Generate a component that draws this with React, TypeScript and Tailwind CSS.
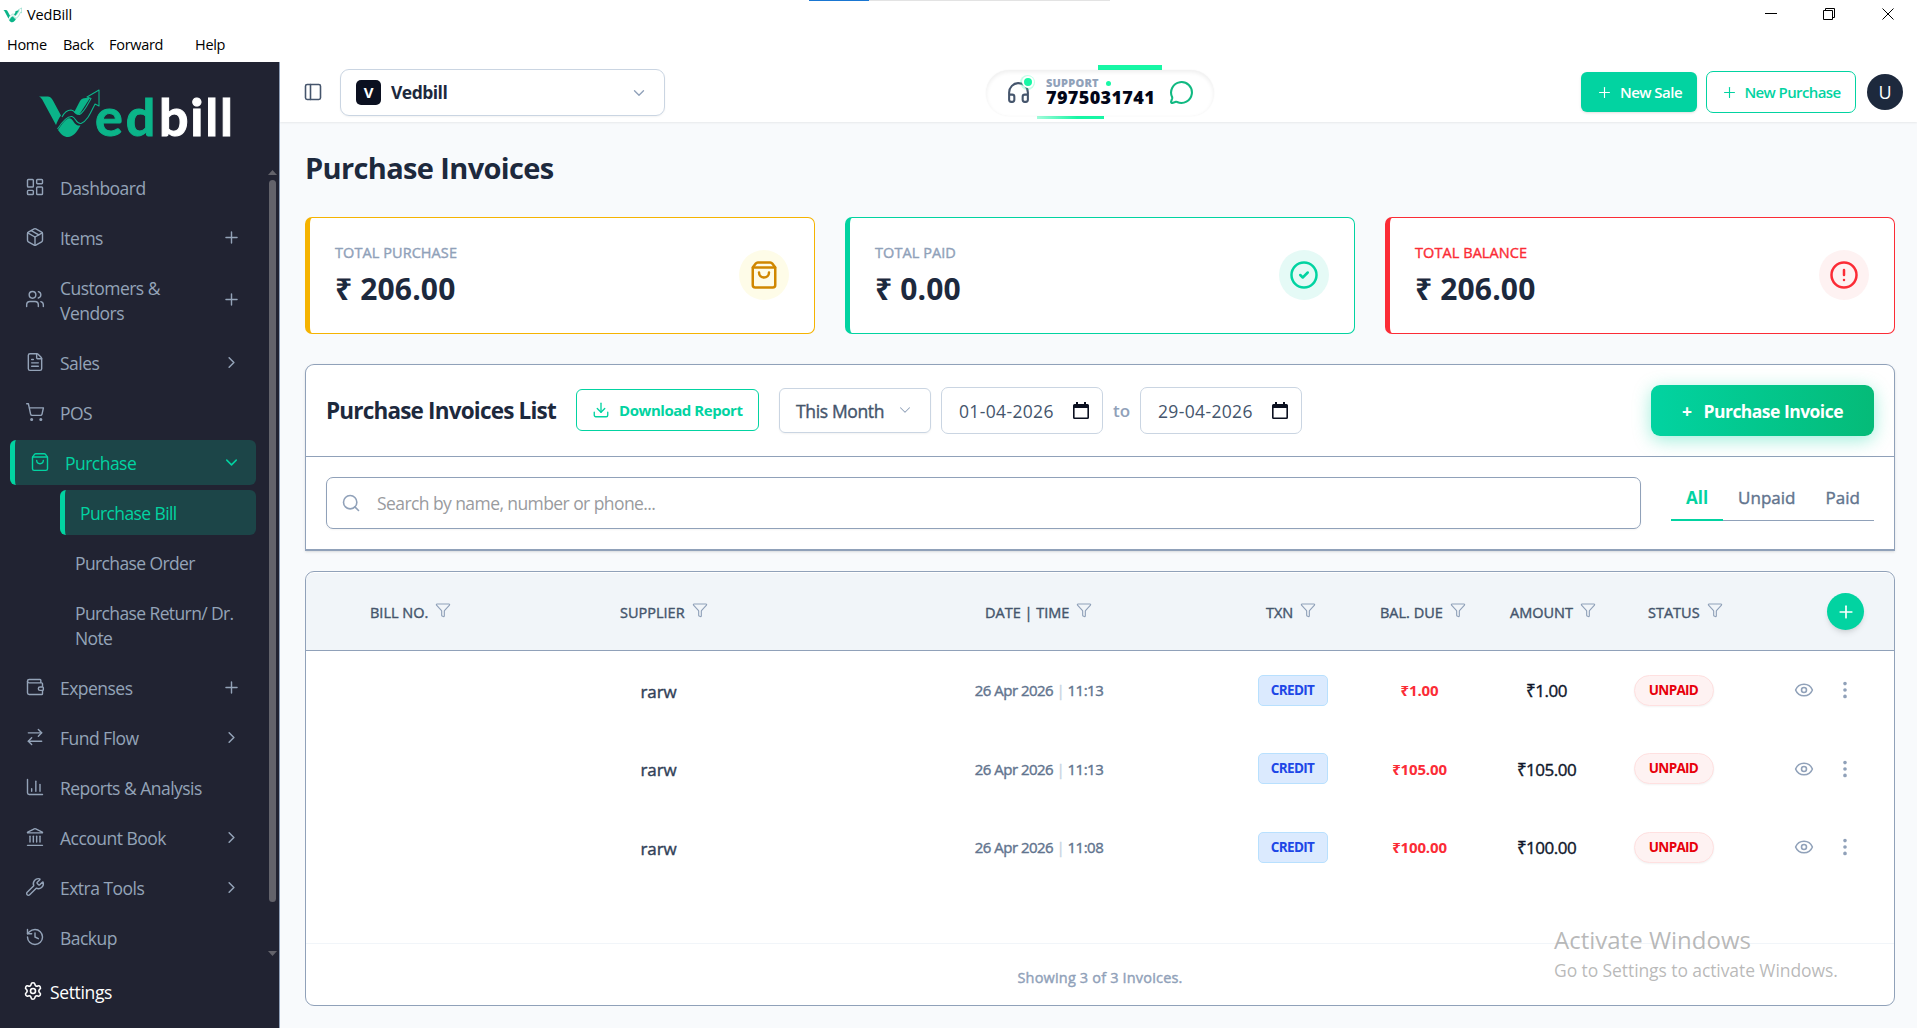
import { useState } from "react";
import {
  ArrowRightLeft,
  ChartColumn,
  ChevronDown,
  ChevronRight,
  CircleAlert,
  CircleCheck,
  Download,
  EllipsisVertical,
  Eye,
  FileText,
  Funnel,
  Headphones,
  History,
  Landmark,
  LayoutDashboard,
  MessageCircle,
  Package,
  PanelLeft,
  Plus,
  Search,
  Settings,
  ShoppingBag,
  ShoppingCart,
  Users,
  Wallet,
  Wrench,
} from "lucide-react";
import type { LucideIcon } from "lucide-react";

interface NavItem {
  name: string;
  icon: LucideIcon;
  tail?: "plus" | "chevron";
  children?: string[];
}

const navItems: NavItem[] = [
  { name: "Dashboard", icon: LayoutDashboard },
  { name: "Items", icon: Package, tail: "plus" },
  { name: "Customers & Vendors", icon: Users, tail: "plus" },
  { name: "Sales", icon: FileText, tail: "chevron" },
  { name: "POS", icon: ShoppingCart },
  {
    name: "Purchase",
    icon: ShoppingBag,
    tail: "chevron",
    children: ["Purchase Bill", "Purchase Order", "Purchase Return/ Dr. Note"],
  },
  { name: "Expenses", icon: Wallet, tail: "plus" },
  { name: "Fund Flow", icon: ArrowRightLeft, tail: "chevron" },
  { name: "Reports & Analysis", icon: ChartColumn },
  { name: "Account Book", icon: Landmark, tail: "chevron" },
  { name: "Extra Tools", icon: Wrench, tail: "chevron" },
  { name: "Backup", icon: History },
];

const columns = [
  { label: "BILL NO.", pad: "pl-[64px]" },
  { label: "SUPPLIER", pad: "pl-[153px]" },
  { label: "DATE | TIME", pad: "pl-[137px]" },
  { label: "TXN", pad: "pl-[37px]" },
  { label: "BAL. DUE", pad: "pl-[24px]" },
  { label: "AMOUNT", pad: "pl-[27px]" },
  { label: "STATUS", pad: "pl-[38px]" },
];

const invoices = [
  { supplier: "rarw", date: "26 Apr 2026", time: "11:13", amount: "₹1.00" },
  { supplier: "rarw", date: "26 Apr 2026", time: "11:13", amount: "₹105.00" },
  { supplier: "rarw", date: "26 Apr 2026", time: "11:08", amount: "₹100.00" },
];

const rowGrid = "grid grid-cols-[161px_381px_381px_127px_127px_127px_127px_1fr]";

// Open Sans has no medium cut, so a thin stroke stands in for it
const medium = "[-webkit-text-stroke:0.4px_currentColor]";

const LogoMark = ({ className }: { className?: string }) => (
  <svg viewBox="0 0 62 50" className={className} fill="none">
    <path d="M1 8.500h9c3 .3 4.200 2.500 5.500 5L23 27.500c-2 2.500-3.800 6-5 9.500L5 13C4 11 3 9.500 1 8.500z" fill="#0bb489" />
    <path d="M20 42c3-5 6-9.500 10-11.500 3.500-1.500 5 3 7.500 5.500 1.500 1.500 3 1.800 5 1.500C39 44 35 49 30 49c-4 0-7-2.500-10-7z" fill="#0bb489" />
    <path d="M36 24.500L42 13c1.500-2.500 3-3 10-3L42 25.500c-2 2-4 1-6-1z" fill="#0bb489" />
    <path
      d="M24 29c2-4 5-7 9-7 4 .3 5 5 8.500 4.500 4.500-2 7.500-9 11.500-16L49 9l12-7v16l-4-2c-4 8-7.500 17-14 19.500-5 .8-5-6-9-7C29.500 28 24 34 19.500 41"
      stroke="#0bb489"
      strokeWidth="1.1"
      strokeLinejoin="round"
    />
  </svg>
);

const TitleBar = () => (
  <div className="h-[62px] bg-white text-black relative shrink-0">
    <div className="flex justify-between">
      <div className="flex items-center h-[29px] pl-[3px] gap-[5px]">
        <LogoMark className="w-[19px] h-[16px]" />
        <span className="text-[14.5px] tracking-[-0.01em]">VedBill</span>
      </div>
      <svg className="w-[137px] h-[30px] mr-[15px]" viewBox="0 0 137 30" fill="none" stroke="#000">
        <path d="M0 13.500h12M58.500 10.500h9v9h-9zM60.500 10.500v-2h9v9h-2M117.500 8.500l11 11M128.500 8.500l-11 11" />
      </svg>
    </div>
    <div className="flex items-center h-[29px] pl-[7px] text-[14.5px] tracking-[-0.02em]">
      <span className="w-[56px]">Home</span>
      <span className="w-[46px]">Back</span>
      <span className="w-[86px]">Forward</span>
      <span>Help</span>
    </div>
    <div className="absolute top-0 left-[809px] flex h-px w-[301px] bg-[#e3e3e3]">
      <div className="w-[60px] bg-[#1976d2]" />
    </div>
  </div>
);

const Sidebar = () => {
  const [openMenu, setOpenMenu] = useState("Purchase");

  return (
    <aside className="w-[280px] shrink-0 bg-[#212332] border-r border-slate-400 flex flex-col text-[#94a3b8] text-[17.5px] leading-[25px]">
      <div className="h-[103px] flex items-start pl-[38px] pt-[26px]">
        <LogoMark className="w-[62px] h-[50px]" />
        <span className="font-[Lato] font-bold text-[52px] leading-[50px] pt-[3px] -ml-[5px] tracking-[0.055em] text-[#0bb489] [-webkit-text-stroke:1px_currentColor]">
          ed<span className="text-white ml-[1px] tracking-[0.035em]">bill</span>
        </span>
      </div>

      <div className="flex h-[795px]">
        <ul className="w-[246px] ml-[10px] flex flex-col gap-[5px]">
          {navItems.map((item) => {
            const isOpen = item.name === openMenu;
            const Icon = item.icon;
            return (
              <li key={item.name}>
                <button
                  onClick={() => setOpenMenu(isOpen ? "" : item.name)}
                  className={`w-full flex items-center text-left pt-[11px] pb-[9px] pr-[15px] rounded-[6px] ${
                    isOpen ? "bg-[#1c4548] text-[#02d3a1] border-l-[5px] border-[#02d3a1] pl-[15px]" : "pl-[15px]"
                  }`}
                >
                  <Icon className="size-[20px] shrink-0 -mt-[4px]" strokeWidth={1.7} />
                  <span className="ml-[15px] w-[120px] grow tracking-[-0.03em]">{item.name}</span>
                  {item.tail === "plus" && <Plus className="size-[19px] shrink-0 -mt-[3px]" strokeWidth={1.8} />}
                  {item.tail === "chevron" &&
                    (isOpen ? (
                      <ChevronDown className="size-[19px] shrink-0 -mt-[3px]" strokeWidth={1.9} />
                    ) : (
                      <ChevronRight className="size-[19px] shrink-0 -mt-[3px]" strokeWidth={1.9} />
                    ))}
                </button>
                {isOpen && item.children && (
                  <ul className="mt-[5px] ml-[50px] flex flex-col gap-[5px] tracking-[-0.035em]">
                    {item.children.map((child, i) => (
                      <li
                        key={child}
                        className={`pt-[11px] pb-[9px] rounded-[6px] ${
                          i === 0 ? "bg-[#1c4548] text-[#02d3a1] border-l-[5px] border-[#02d3a1] pl-[15px]" : "pl-[15px] pr-[15px]"
                        }`}
                      >
                        {child}
                      </li>
                    ))}
                  </ul>
                )}
              </li>
            );
          })}
        </ul>
        <div className="ml-[12px] w-[9px] flex flex-col items-center pt-[5px]">
          <svg className="w-[9px] h-[5px]" viewBox="0 0 9 5" fill="#63636b">
            <path d="M0 5L4.500 0L9 5z" />
          </svg>
          <div className="w-[7px] h-[722px] mt-[5px] rounded-full bg-[#63636b]" />
          <svg className="w-[9px] h-[5px] mt-[49px]" viewBox="0 0 9 5" fill="#63636b">
            <path d="M0 0L4.500 5L9 0z" />
          </svg>
        </div>
      </div>

      <div className="flex items-center gap-[7px] pl-[23px] pt-[20px] text-white">
        <Settings className="size-[20px] -mt-[3px]" strokeWidth={1.9} />
        <span className="tracking-[-0.02em]">Settings</span>
      </div>
    </aside>
  );
};

const SupportPill = () => (
  <div className="relative w-[228px] h-[54px] flex items-center">
    <div className="absolute left-[112px] top-0 w-[64px] h-[6px] bg-[#17f7a5]" />
    <div className="absolute left-[51px] bottom-0 w-[67px] h-[6px] bg-gradient-to-r from-[#17f7a5]/40 to-[#17f7a5] to-60%" />
    <div className="relative w-full h-[46px] mt-px rounded-full bg-white shadow-[inset_0_2px_4px_rgba(0,0,0,0.07),0_0_2px_rgba(0,0,0,0.05)] flex items-center pl-[20px]">
      <div className="relative -mt-px">
        <Headphones className="size-[25px] text-slate-600" strokeWidth={2} />
        <span className="absolute -top-[5px] right-[-4px] size-[15px] rounded-full bg-[#17f7a5]/25 flex items-center justify-center">
          <span className="size-[12px] rounded-full bg-[#17f7a5] border-2 border-white" />
        </span>
      </div>
      <div className="ml-[15px] w-[116px] -mt-[2px]">
        <div className="flex items-center gap-[7px] text-[11px] leading-[12px] font-extrabold tracking-[0.02em] text-slate-400">
          SUPPORT
          <span className="size-[5px] rounded-full bg-[#17f7a5]" />
        </div>
        <div className="text-[18px] leading-[17px] font-extrabold tracking-[0.02em] text-slate-950">7975031741</div>
      </div>
      <MessageCircle className="size-[25px] ml-[7px] -mt-px text-[#10b981]" strokeWidth={2} />
    </div>
  </div>
);

const Header = () => (
  <header className="h-[60px] bg-white flex items-center pl-[23px] pr-[14px] shrink-0 shadow-[0_1px_2px_rgba(0,0,0,0.07)]">
    <PanelLeft className="size-5 text-slate-600" strokeWidth={1.9} />
    <div className="ml-[17px] w-[325px] h-[47px] mt-px border border-slate-300 rounded-[9px] shadow-xs flex items-center pl-[15px] pr-[16px]">
      <span className="size-[25px] rounded-[5px] bg-[#0b1020] text-white font-bold text-[15px] flex items-center justify-center">
        V
      </span>
      <span className="ml-[10px] grow font-bold text-[17.5px] tracking-[-0.03em] text-slate-800">Vedbill</span>
      <ChevronDown className="size-[18px] text-slate-400" strokeWidth={1.8} />
    </div>
    <div className="ml-[321px] grow">
      <SupportPill />
    </div>
    <button className="w-[116px] h-[40px] rounded-[6px] bg-[#02d3a1] text-white font-semibold text-[15px] tracking-[-0.035em] flex items-center justify-center gap-[7px] shadow-sm">
      <Plus className="size-[17px]" strokeWidth={1.6} />
      New Sale
    </button>
    <button className="ml-[9px] w-[150px] h-[42px] rounded-[7px] border border-[#02d3a1] text-[#02d3a1] font-semibold text-[15px] tracking-[-0.04em] flex items-center justify-center gap-[6px]">
      <Plus className="size-[17px]" strokeWidth={1.6} />
      New Purchase
    </button>
    <div className="ml-[11px] size-[36px] rounded-full bg-slate-800 text-white text-[18px] flex items-center justify-center">U</div>
  </header>
);

const cards = [
  {
    label: "TOTAL PURCHASE",
    value: "₹ 206.00",
    icon: ShoppingBag,
    border: "border-[#f5b301]",
    text: "text-slate-400",
    badge: "bg-[#fefce8] text-[#d08700]",
  },
  {
    label: "TOTAL PAID",
    value: "₹ 0.00",
    icon: CircleCheck,
    border: "border-[#02d3a1]",
    text: "text-slate-400",
    badge: "bg-[#e5faf6] text-[#02d3a1]",
  },
  {
    label: "TOTAL BALANCE",
    value: "₹ 206.00",
    icon: CircleAlert,
    border: "border-[#fb2c36]",
    text: "text-[#fb2c36]",
    badge: "bg-[#fef2f2] text-[#fb2c36]",
  },
];

const SummaryCards = () => (
  <div className="grid grid-cols-3 gap-[30px]">
    {cards.map((card) => {
      const Icon = card.icon;
      return (
        <div
          key={card.label}
          className={`h-[117px] bg-white border border-l-[5px] rounded-[7px] flex items-center justify-between px-[25px] ${card.border}`}
        >
          <div>
            <p className={`text-[14.5px] leading-[20px] tracking-[0.005em] ${medium} ${card.text}`}>{card.label}</p>
            <p className="mt-[7px] text-[30px] leading-[38px] tracking-[0.005em] font-bold text-slate-800">{card.value}</p>
          </div>
          <div className={`size-[50px] -mt-[2px] rounded-full flex items-center justify-center ${card.badge}`}>
            <Icon className="size-[30px]" />
          </div>
        </div>
      );
    })}
  </div>
);

const DateField = ({ value }: { value: string }) => (
  <div className="w-[162px] h-[47px] border border-slate-300 rounded-[7px] flex items-center justify-between pl-[17px] pr-[13px] text-[17.5px] text-slate-600">
    <span className="tracking-[0.02em] pt-px">{value}</span>
    <svg className="w-[16px] h-[18px]" viewBox="0 0 16 18" fill="#0b1020">
      <path d="M3 0h2v2h6V0h2v2h1.500A1.500 1.500 0 0 1 16 3.500v12a1.500 1.500 0 0 1-1.500 1.500h-13A1.500 1.500 0 0 1 0 15.500v-12A1.500 1.500 0 0 1 1.500 2H3zM1.600 6v9.400h12.800V6z" />
    </svg>
  </div>
);

const FilterPanel = () => {
  const [tab, setTab] = useState("All");

  return (
    <section className="mt-[30px] h-[187px] bg-white border border-b-2 border-slate-400 rounded-t-[9px] shadow-sm">
      <div className="h-[92px] border-b border-slate-400 flex items-center px-5">
        <h2 className="w-[250px] pt-px text-[22.5px] tracking-[-0.036em] font-bold text-slate-800 whitespace-nowrap">Purchase Invoices List</h2>
        <button className="w-[183px] h-[42px] -mt-px rounded-[6px] border border-[#02d3a1] text-[#02d3a1] font-bold text-[15px] tracking-[-0.03em] flex items-center pl-[15px] gap-[9px]">
          <Download className="size-[18px]" strokeWidth={1.8} />
          Download Report
        </button>
        <div className={`ml-5 w-[152px] h-[45px] rounded-[6px] border border-slate-300 shadow-xs flex items-center justify-between pl-[16px] pr-[16px] text-[17.5px] tracking-[-0.02em] text-slate-600 ${medium}`}>
          <span className="pt-px">This Month</span>
          <ChevronDown className="size-[18px] text-slate-400 -mt-[2px]" strokeWidth={1.4} />
        </div>
        <div className="ml-[10px] flex items-center">
          <DateField value="01-04-2026" />
          <span className="w-[37px] text-center text-[17px] font-semibold text-slate-400 pt-px">to</span>
          <DateField value="29-04-2026" />
        </div>
        <button className="ml-auto w-[223px] h-[51px] pt-px rounded-[9px] bg-gradient-to-r from-[#02d3a1] to-[#05bb78] text-white font-bold text-[17.5px] tracking-[-0.03em] flex items-center justify-center gap-[12px] shadow-[0_4px_18px_rgba(2,211,161,0.38)]">
          <span>+</span>
          Purchase Invoice
        </button>
      </div>
      <div className="flex items-start pl-5 pr-5 pt-5">
        <div className="w-[1315px] h-[52px] border border-slate-400 rounded-[7px] shadow-xs flex items-center pl-[14px]">
          <Search className="size-[20px] text-slate-400" strokeWidth={1.9} />
          <span className="ml-4 text-[17.5px] tracking-[-0.033em] text-[#999b9e]">Search by name, number or phone...</span>
        </div>
        <div className="ml-[30px] flex w-[203px] h-[44px] border-b border-slate-400 text-[17px] tracking-[0em]">
          {["All", "Unpaid", "Paid"].map((name) => (
            <button
              key={name}
              onClick={() => setTab(name)}
              className={`h-[44px] px-[15px] whitespace-nowrap ${
                tab === name ? "text-[#02d3a1] font-bold border-b-2 border-[#02d3a1] pb-px" : `text-slate-500 pb-[3px] ${medium}`
              }`}
            >
              {name}
            </button>
          ))}
        </div>
      </div>
    </section>
  );
};

const InvoiceTable = () => (
  <section className="mt-5 h-[435px] pt-px bg-white border border-slate-400 rounded-[9px] overflow-hidden flex flex-col">
    <div className={`${rowGrid} h-[78px] shrink-0 bg-[#f1f5f9] rounded-t-[8px] border-b border-slate-400 items-center text-[14.5px] tracking-[0em] text-slate-600 ${medium}`}>
      {columns.map((col) => (
        <div key={col.label} className={`flex items-center whitespace-nowrap gap-[7px] ${col.pad}`}>
          <span className="pt-[2px]">{col.label}</span>
          <Funnel className="size-[16px] text-slate-400 shrink-0 -mt-[3px]" strokeWidth={1.7} />
        </div>
      ))}
      <div className="pl-[90px]">
        <div className="size-[37px] rounded-full bg-[#02d3a1] text-white shadow-md flex items-center justify-center">
          <Plus className="size-[20px]" strokeWidth={2} />
        </div>
      </div>
    </div>
    <div className="grow">
      {invoices.map((row, i) => (
        <div key={i} className={`${rowGrid} h-[78.5px] items-center text-center`}>
          <div />
          <div className={`text-[17px] tracking-[-0.01em] text-slate-700 pt-[2px] pl-[2px] ${medium}`}>{row.supplier}</div>
          <div className={`text-[15px] tracking-[-0.035em] text-slate-500 pl-px ${medium}`}>
            {row.date} <span className="text-slate-300">|</span> {row.time}
          </div>
          <div className="w-[70px] h-[31px] mx-auto rounded-[5px] border border-[#b8e0fe] bg-[#dbeafe] text-[#1d47e6] text-[13.5px] tracking-[-0.05em] leading-[28px] font-bold">
            CREDIT
          </div>
          <div className="text-[15px] tracking-[-0.01em] font-bold text-[#fb2c36]">{row.amount}</div>
          <div className={`text-[17px] tracking-[-0.03em] text-slate-900 pt-[1px] ${medium}`}>{row.amount}</div>
          <div className="w-[80px] h-[31px] mx-auto rounded-full border border-[#ffe0e0] bg-[#fef2f2] text-[#e7000b] text-[13.5px] tracking-[-0.05em] leading-[28px] font-bold shadow-xs">
            UNPAID
          </div>
          <div className="flex items-center pl-[57px] text-slate-400">
            <Eye className="size-[20px]" strokeWidth={1.9} />
            <EllipsisVertical className="size-[22px] ml-[20px]" strokeWidth={2} />
          </div>
        </div>
      ))}
    </div>
    <div className={`h-[62px] border-t border-slate-100 flex items-center justify-center pt-[6px] text-[14.5px] tracking-[0.012em] text-slate-400 ${medium}`}>
      Showing 3 of 3 Invoices.
    </div>
  </section>
);

const App = () => {
  return (
    <div className="relative w-[1917px] h-[1028px] overflow-hidden flex flex-col bg-white font-['Open_Sans','Noto_Sans',sans-serif]">
      <TitleBar />
      <div className="flex grow">
        <Sidebar />
        <div className="grow flex flex-col bg-[#f8fafc]">
          <Header />
          <main className="pl-[25px] pr-[22px] pt-[24px]">
            <h1 className="h-[71px] text-[29px] leading-[44px] tracking-[-0.022em] font-bold text-slate-800">Purchase Invoices</h1>
            <SummaryCards />
            <FilterPanel />
            <InvoiceTable />
          </main>
        </div>
      </div>
      <div className="absolute left-[1554px] top-[922px] text-[#8a8a8a]/60 pointer-events-none">
        <p className="text-[24px] leading-[36px]">Activate Windows</p>
        <p className="text-[17.5px] leading-[24px] tracking-[-0.005em]">Go to Settings to activate Windows.</p>
      </div>
    </div>
  );
};

export default App;
